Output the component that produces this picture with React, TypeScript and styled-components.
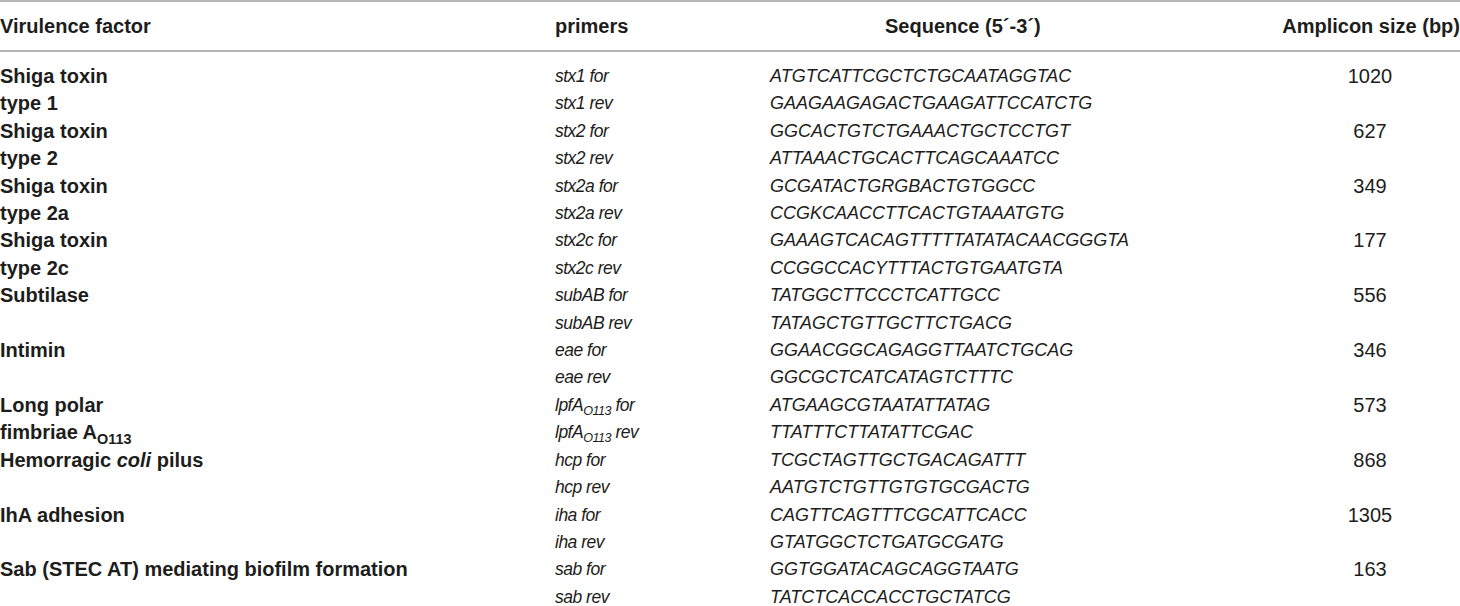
import React from 'react';
import styled, { createGlobalStyle } from 'styled-components';

const GlobalStyle = createGlobalStyle`
  body {
    margin: 0;
    background: #fff;
    font-family: "Liberation Sans", Arial, sans-serif;
    color: #1d1d1b;
  }
`;

const COLS = '555px 215px 510px 180px';

const Table = styled.div`
  width: 1460px;
  border-top: 2px solid #b5b5b5;
`;

const HeaderRow = styled.div`
  display: grid;
  grid-template-columns: ${COLS};
  height: 48px;
  align-items: center;
  border-bottom: 2px solid #b5b5b5;
`;

const HeadCell = styled.div<{ $align?: 'left' | 'center' | 'right'; $indent?: number }>`
  font-weight: bold;
  font-size: 20px;
  text-align: ${(p) => p.$align || 'left'};
  padding-left: ${(p) => p.$indent || 0}px;
  white-space: nowrap;
`;

const Body = styled.div`
  padding-top: 11px;
`;

const Row = styled.div`
  display: grid;
  grid-template-columns: ${COLS};
  line-height: 27.4px;
  font-size: 18px;
  white-space: nowrap;
`;

const Factor = styled.div`
  font-weight: bold;
  font-size: 20px;
`;

const Primer = styled.div`
  font-style: italic;
  letter-spacing: -0.5px;
  font-size: 17.5px;
`;

const Sequence = styled.div`
  font-style: italic;
`;

const Size = styled.div`
  text-align: center;
  font-size: 20px;
`;

const Sub = styled.sub`
  font-size: 0.72em;
  line-height: 0;
  vertical-align: -0.35em;
`;

interface Entry {
  factor: [React.ReactNode, React.ReactNode];
  primers: [React.ReactNode, React.ReactNode];
  seqs: [string, string];
  size: string;
}

const o113 = <Sub>O113</Sub>;

const entries: Entry[] = [
  {
    factor: ['Shiga toxin', 'type 1'],
    primers: ['stx1 for', 'stx1 rev'],
    seqs: ['ATGTCATTCGCTCTGCAATAGGTAC', 'GAAGAAGAGACTGAAGATTCCATCTG'],
    size: '1020',
  },
  {
    factor: ['Shiga toxin', 'type 2'],
    primers: ['stx2 for', 'stx2 rev'],
    seqs: ['GGCACTGTCTGAAACTGCTCCTGT', 'ATTAAACTGCACTTCAGCAAATCC'],
    size: '627',
  },
  {
    factor: ['Shiga toxin', 'type 2a'],
    primers: ['stx2a for', 'stx2a rev'],
    seqs: ['GCGATACTGRGBACTGTGGCC', 'CCGKCAACCTTCACTGTAAATGTG'],
    size: '349',
  },
  {
    factor: ['Shiga toxin', 'type 2c'],
    primers: ['stx2c for', 'stx2c rev'],
    seqs: ['GAAAGTCACAGTTTTTATATACAACGGGTA', 'CCGGCCACYTTTACTGTGAATGTA'],
    size: '177',
  },
  {
    factor: ['Subtilase', ''],
    primers: ['subAB for', 'subAB rev'],
    seqs: ['TATGGCTTCCCTCATTGCC', 'TATAGCTGTTGCTTCTGACG'],
    size: '556',
  },
  {
    factor: ['Intimin', ''],
    primers: ['eae for', 'eae rev'],
    seqs: ['GGAACGGCAGAGGTTAATCTGCAG', 'GGCGCTCATCATAGTCTTTC'],
    size: '346',
  },
  {
    factor: ['Long polar', <>fimbriae A{o113}</>],
    primers: [<>lpfA{o113} for</>, <>lpfA{o113} rev</>],
    seqs: ['ATGAAGCGTAATATTATAG', 'TTATTTCTTATATTCGAC'],
    size: '573',
  },
  {
    factor: [<>Hemorragic <i>coli</i> pilus</>, ''],
    primers: ['hcp for', 'hcp rev'],
    seqs: ['TCGCTAGTTGCTGACAGATTT', 'AATGTCTGTTGTGTGCGACTG'],
    size: '868',
  },
  {
    factor: ['IhA adhesion', ''],
    primers: ['iha for', 'iha rev'],
    seqs: ['CAGTTCAGTTTCGCATTCACC', 'GTATGGCTCTGATGCGATG'],
    size: '1305',
  },
  {
    factor: ['Sab (STEC AT) mediating biofilm formation', ''],
    primers: ['sab for', 'sab rev'],
    seqs: ['GGTGGATACAGCAGGTAATG', 'TATCTCACCACCTGCTATCG'],
    size: '163',
  },
];

export default function App() {
  return (
    <>
      <GlobalStyle />
      <Table>
        <HeaderRow>
          <HeadCell>Virulence factor</HeadCell>
          <HeadCell>primers</HeadCell>
          <HeadCell $indent={115}>Sequence (5´-3´)</HeadCell>
          <HeadCell $align="right">Amplicon size (bp)</HeadCell>
        </HeaderRow>
        <Body>
          {entries.map((e, i) => (
            <React.Fragment key={i}>
              <Row>
                <Factor>{e.factor[0]}</Factor>
                <Primer>{e.primers[0]}</Primer>
                <Sequence>{e.seqs[0]}</Sequence>
                <Size>{e.size}</Size>
              </Row>
              <Row>
                <Factor>{e.factor[1]}</Factor>
                <Primer>{e.primers[1]}</Primer>
                <Sequence>{e.seqs[1]}</Sequence>
                <Size />
              </Row>
            </React.Fragment>
          ))}
        </Body>
      </Table>
    </>
  );
}
